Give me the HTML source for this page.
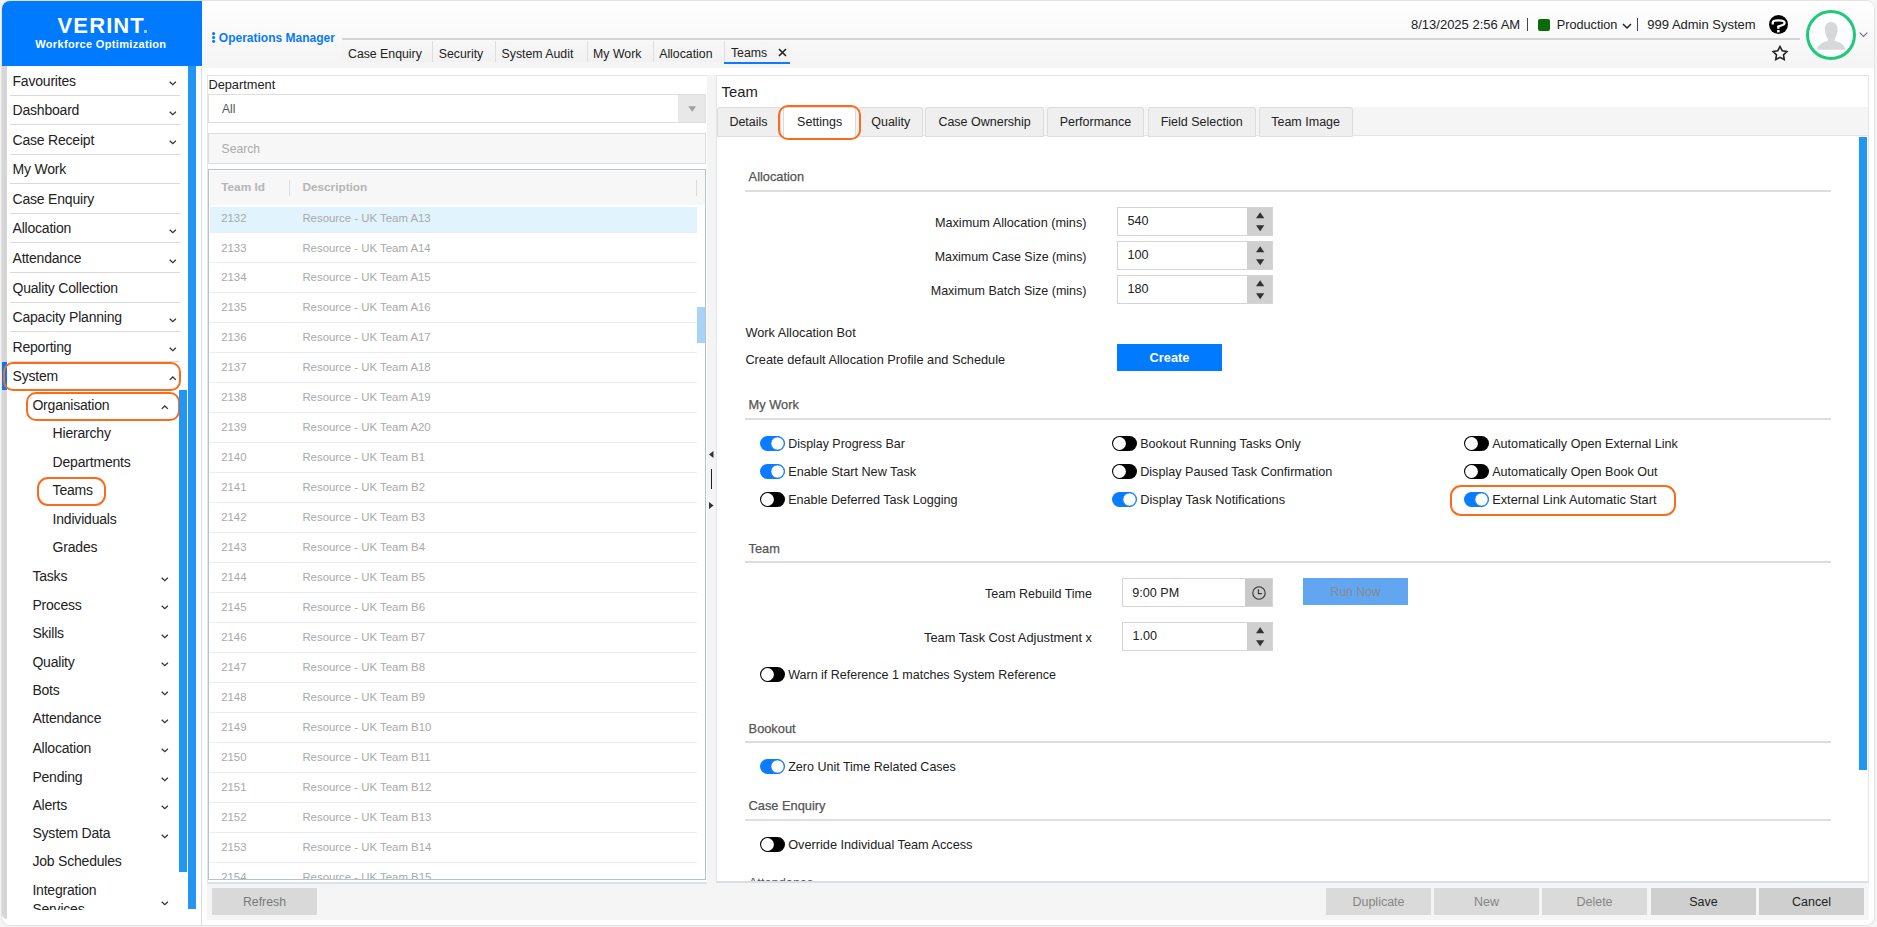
<!DOCTYPE html><html><head><meta charset="utf-8"><style>
*{margin:0;padding:0;box-sizing:border-box}
html,body{width:1877px;height:927px;overflow:hidden;background:#f5f5f5;font-family:"Liberation Sans", sans-serif}
.t{position:absolute;line-height:1;white-space:nowrap}
.r{position:absolute}
svg{position:absolute;overflow:visible}
</style></head><body>
<div class="r" style="left:2.00px;top:1.00px;width:1872.00px;height:924.00px;background:#fff;border-radius:8px;box-shadow:0 0 1px 1px #e2e2e2"></div>
<div class="r" style="left:202.00px;top:1.00px;width:1672.00px;height:66.60px;background:linear-gradient(#ffffff,#f4f4f4);border-top-right-radius:8px"></div>
<div class="r" style="left:2.00px;top:1.00px;width:200.00px;height:65.00px;background:#007bff;border-top-left-radius:8px"></div>
<div class="t" style="left:57.60px;top:14.58px;font-size:22px;color:#fff;font-weight:bold;letter-spacing:1.1px">VERINT</div>
<div class="r" style="left:143.50px;top:29.80px;width:3.00px;height:3.00px;background:#9cc8ff"></div>
<div class="t" style="left:35.30px;top:39.19px;font-size:11px;color:#fff;font-weight:bold;letter-spacing:0.33px">Workforce Optimization</div>
<svg style="left:210px;top:30px" width="8" height="15" viewBox="0 0 8 15"><circle cx="3.6" cy="3.6" r="1.6" fill="#0b7bff"/><circle cx="3.6" cy="7.5" r="1.6" fill="#0b7bff"/><circle cx="3.6" cy="11.3" r="1.6" fill="#0b7bff"/></svg>
<div class="t" style="left:218.80px;top:32.34px;font-size:12px;color:#0b7af8;font-weight:bold;">Operations Manager</div>
<div class="r" style="left:342.00px;top:38.00px;width:1458.00px;height:2.00px;background:#d4d4d4"></div>
<div class="r" style="left:342.00px;top:41.00px;width:448.00px;height:21.00px;background:linear-gradient(#f7f7f7,#f2f2f2)"></div>
<div class="t" style="left:348.00px;top:48.19px;font-size:12.3px;color:#222;font-weight:normal;">Case Enquiry</div>
<div class="r" style="left:432.20px;top:41.00px;width:1.00px;height:21.00px;background:#dedede"></div>
<div class="t" style="left:438.80px;top:48.19px;font-size:12.3px;color:#222;font-weight:normal;">Security</div>
<div class="r" style="left:495.00px;top:41.00px;width:1.00px;height:21.00px;background:#dedede"></div>
<div class="t" style="left:501.60px;top:48.19px;font-size:12.3px;color:#222;font-weight:normal;">System Audit</div>
<div class="r" style="left:586.50px;top:41.00px;width:1.00px;height:21.00px;background:#dedede"></div>
<div class="t" style="left:593.10px;top:48.19px;font-size:12.3px;color:#222;font-weight:normal;">My Work</div>
<div class="r" style="left:652.60px;top:41.00px;width:1.00px;height:21.00px;background:#dedede"></div>
<div class="t" style="left:659.20px;top:48.19px;font-size:12.3px;color:#222;font-weight:normal;">Allocation</div>
<div class="r" style="left:723.60px;top:41.00px;width:1.00px;height:21.00px;background:#dedede"></div>
<div class="t" style="left:730.90px;top:46.89px;font-size:12.3px;color:#222;font-weight:normal;">Teams</div>
<svg style="left:777.5px;top:48px" width="9" height="9" viewBox="0 0 9 9"><path d="M1 1L8 8M8 1L1 8" stroke="#222" stroke-width="1.6"/></svg>
<div class="r" style="left:723.60px;top:62.00px;width:66.40px;height:2.00px;background:#0b7bff"></div>
<div class="t" style="left:1411.00px;top:18.00px;font-size:13px;color:#222;font-weight:normal;">8/13/2025 2:56 AM</div>
<div class="r" style="left:1527.00px;top:18.00px;width:1.00px;height:13.00px;background:#444"></div>
<div class="r" style="left:1538.00px;top:19.00px;width:12.00px;height:11.60px;background:#0a6b0a;border-radius:2px"></div>
<div class="t" style="left:1556.70px;top:18.75px;font-size:12.7px;color:#222;font-weight:normal;">Production</div>
<svg style="left:1622px;top:23px" width="10" height="6" viewBox="0 0 10 6"><path d="M1 1L5 5L9 1" stroke="#222" stroke-width="1.5" fill="none"/></svg>
<div class="r" style="left:1637.00px;top:18.00px;width:1.00px;height:13.00px;background:#444"></div>
<div class="t" style="left:1647.30px;top:18.00px;font-size:13px;color:#222;font-weight:normal;">999 Admin System</div>
<svg style="left:1769px;top:15px" width="19" height="19" viewBox="0 0 19 19"><circle cx="9.5" cy="9.5" r="9.5" fill="#000"/><path d="M3.75 9.4L3.75 7.6C3.75 5.9 5.5 5.45 9.5 5.45C13.7 5.45 15.6 6.2 15.6 8C15.6 10 13 10.4 9.3 11.3L9.3 13.8" stroke="#fff" stroke-width="2.3" fill="none" stroke-linejoin="round"/><rect x="8.1" y="15" width="2.5" height="2.4" fill="#fff"/></svg>
<svg style="left:1771px;top:44.5px" width="18" height="17" viewBox="0 0 18 17"><path d="M9.00 1.50L11.17 5.71L15.85 6.48L12.52 9.84L13.23 14.52L9.00 12.40L4.77 14.52L5.48 9.84L2.15 6.48L6.83 5.71Z" stroke="#222" stroke-width="1.6" fill="none" stroke-linejoin="miter"/></svg>
<svg style="left:1806px;top:10px" width="50" height="50" viewBox="0 0 50 50"><circle cx="25" cy="25" r="23.5" fill="#fff" stroke="#1ec97a" stroke-width="3"/><path d="M25.2 12C29.3 12 31.6 15 31.6 19.5C31.6 24 29.8 27 28.6 29L28.6 31C33 31.8 38.5 34 39.5 39.8L10.9 39.8C12 34 17.5 31.8 21.8 31L21.8 29C20.6 27 18.8 24 18.8 19.5C18.8 15 21.1 12 25.2 12Z" fill="#d7d8da"/></svg>
<svg style="left:1858.5px;top:31.5px" width="9" height="6" viewBox="0 0 9 6"><path d="M0.7 0.7L4.5 4.5L8.3 0.7" stroke="#6a7080" stroke-width="1.1" fill="none"/></svg>
<div class="r" style="left:2.00px;top:66.00px;width:5.00px;height:853.00px;background:#d6d6d6;border-bottom-left-radius:6px"></div>
<div class="r" style="left:201.00px;top:67.00px;width:1.00px;height:858.00px;background:#dcdcdc"></div>
<div class="t" style="left:12.50px;top:73.65px;font-size:14px;color:#222;font-weight:normal;letter-spacing:-0.2px">Favourites</div>
<div class="r" style="left:10.00px;top:95.00px;width:170.00px;height:1.00px;background:#dadada"></div>
<svg style="left:168.8px;top:81.30000000000001px" width="8" height="5" viewBox="0 0 8 5"><path d="M0.7 0.7L3.8 3.6L6.9 0.7" stroke="#333" stroke-width="1.3" fill="none"/></svg>
<div class="t" style="left:12.50px;top:103.20px;font-size:14px;color:#222;font-weight:normal;letter-spacing:-0.2px">Dashboard</div>
<div class="r" style="left:10.00px;top:124.00px;width:170.00px;height:1.00px;background:#dadada"></div>
<svg style="left:168.8px;top:110.85000000000001px" width="8" height="5" viewBox="0 0 8 5"><path d="M0.7 0.7L3.8 3.6L6.9 0.7" stroke="#333" stroke-width="1.3" fill="none"/></svg>
<div class="t" style="left:12.50px;top:132.75px;font-size:14px;color:#222;font-weight:normal;letter-spacing:-0.2px">Case Receipt</div>
<div class="r" style="left:10.00px;top:154.00px;width:170.00px;height:1.00px;background:#dadada"></div>
<svg style="left:168.8px;top:140.4px" width="8" height="5" viewBox="0 0 8 5"><path d="M0.7 0.7L3.8 3.6L6.9 0.7" stroke="#333" stroke-width="1.3" fill="none"/></svg>
<div class="t" style="left:12.50px;top:162.30px;font-size:14px;color:#222;font-weight:normal;letter-spacing:-0.2px">My Work</div>
<div class="r" style="left:10.00px;top:183.00px;width:170.00px;height:1.00px;background:#dadada"></div>
<div class="t" style="left:12.50px;top:191.85px;font-size:14px;color:#222;font-weight:normal;letter-spacing:-0.2px">Case Enquiry</div>
<div class="r" style="left:10.00px;top:213.00px;width:170.00px;height:1.00px;background:#dadada"></div>
<div class="t" style="left:12.50px;top:221.40px;font-size:14px;color:#222;font-weight:normal;letter-spacing:-0.2px">Allocation</div>
<div class="r" style="left:10.00px;top:242.00px;width:170.00px;height:1.00px;background:#dadada"></div>
<svg style="left:168.8px;top:229.05px" width="8" height="5" viewBox="0 0 8 5"><path d="M0.7 0.7L3.8 3.6L6.9 0.7" stroke="#333" stroke-width="1.3" fill="none"/></svg>
<div class="t" style="left:12.50px;top:250.95px;font-size:14px;color:#222;font-weight:normal;letter-spacing:-0.2px">Attendance</div>
<div class="r" style="left:10.00px;top:272.00px;width:170.00px;height:1.00px;background:#dadada"></div>
<svg style="left:168.8px;top:258.6px" width="8" height="5" viewBox="0 0 8 5"><path d="M0.7 0.7L3.8 3.6L6.9 0.7" stroke="#333" stroke-width="1.3" fill="none"/></svg>
<div class="t" style="left:12.50px;top:280.50px;font-size:14px;color:#222;font-weight:normal;letter-spacing:-0.2px">Quality Collection</div>
<div class="r" style="left:10.00px;top:302.00px;width:170.00px;height:1.00px;background:#dadada"></div>
<div class="t" style="left:12.50px;top:310.05px;font-size:14px;color:#222;font-weight:normal;letter-spacing:-0.2px">Capacity Planning</div>
<div class="r" style="left:10.00px;top:331.00px;width:170.00px;height:1.00px;background:#dadada"></div>
<svg style="left:168.8px;top:317.7px" width="8" height="5" viewBox="0 0 8 5"><path d="M0.7 0.7L3.8 3.6L6.9 0.7" stroke="#333" stroke-width="1.3" fill="none"/></svg>
<div class="t" style="left:12.50px;top:339.60px;font-size:14px;color:#222;font-weight:normal;letter-spacing:-0.2px">Reporting</div>
<div class="r" style="left:10.00px;top:361.00px;width:170.00px;height:1.00px;background:#dadada"></div>
<svg style="left:168.8px;top:347.25px" width="8" height="5" viewBox="0 0 8 5"><path d="M0.7 0.7L3.8 3.6L6.9 0.7" stroke="#333" stroke-width="1.3" fill="none"/></svg>
<div class="t" style="left:12.50px;top:369.15px;font-size:14px;color:#222;font-weight:normal;letter-spacing:-0.2px">System</div>
<svg style="left:168.8px;top:375.79999999999995px" width="8" height="5" viewBox="0 0 8 5"><path d="M0.7 3.9L3.8 1L6.9 3.9" stroke="#333" stroke-width="1.3" fill="none"/></svg>
<div class="r" style="left:2.00px;top:362.00px;width:5.00px;height:28.00px;background:#007bff"></div>
<div class="r" style="left:3.00px;top:362.00px;width:178.00px;height:28.50px;border:2px solid #fc6a1c;border-radius:10px"></div>
<div class="t" style="left:32.40px;top:398.05px;font-size:14px;color:#222;font-weight:normal;letter-spacing:-0.2px">Organisation</div>
<svg style="left:160.8px;top:404.8px" width="8" height="5" viewBox="0 0 8 5"><path d="M0.7 3.9L3.8 1L6.9 3.9" stroke="#333" stroke-width="1.3" fill="none"/></svg>
<div class="r" style="left:26.00px;top:392.00px;width:154.00px;height:29.00px;border:2px solid #fc6a1c;border-radius:10px"></div>
<div class="t" style="left:52.60px;top:426.35px;font-size:14px;color:#222;font-weight:normal;letter-spacing:-0.2px">Hierarchy</div>
<div class="t" style="left:52.60px;top:454.85px;font-size:14px;color:#222;font-weight:normal;letter-spacing:-0.2px">Departments</div>
<div class="t" style="left:52.60px;top:483.35px;font-size:14px;color:#222;font-weight:normal;letter-spacing:-0.2px">Teams</div>
<div class="t" style="left:52.60px;top:511.85px;font-size:14px;color:#222;font-weight:normal;letter-spacing:-0.2px">Individuals</div>
<div class="t" style="left:52.60px;top:540.35px;font-size:14px;color:#222;font-weight:normal;letter-spacing:-0.2px">Grades</div>
<div class="r" style="left:37.00px;top:477.00px;width:68.70px;height:29.00px;border:2px solid #fc6a1c;border-radius:11px"></div>
<div class="t" style="left:32.40px;top:569.05px;font-size:14px;color:#222;font-weight:normal;letter-spacing:-0.2px">Tasks</div>
<svg style="left:160.8px;top:576.6999999999999px" width="8" height="5" viewBox="0 0 8 5"><path d="M0.7 0.7L3.8 3.6L6.9 0.7" stroke="#333" stroke-width="1.3" fill="none"/></svg>
<div class="t" style="left:32.40px;top:597.55px;font-size:14px;color:#222;font-weight:normal;letter-spacing:-0.2px">Process</div>
<svg style="left:160.8px;top:605.1999999999999px" width="8" height="5" viewBox="0 0 8 5"><path d="M0.7 0.7L3.8 3.6L6.9 0.7" stroke="#333" stroke-width="1.3" fill="none"/></svg>
<div class="t" style="left:32.40px;top:626.35px;font-size:14px;color:#222;font-weight:normal;letter-spacing:-0.2px">Skills</div>
<svg style="left:160.8px;top:634.0px" width="8" height="5" viewBox="0 0 8 5"><path d="M0.7 0.7L3.8 3.6L6.9 0.7" stroke="#333" stroke-width="1.3" fill="none"/></svg>
<div class="t" style="left:32.40px;top:654.65px;font-size:14px;color:#222;font-weight:normal;letter-spacing:-0.2px">Quality</div>
<svg style="left:160.8px;top:662.3px" width="8" height="5" viewBox="0 0 8 5"><path d="M0.7 0.7L3.8 3.6L6.9 0.7" stroke="#333" stroke-width="1.3" fill="none"/></svg>
<div class="t" style="left:32.40px;top:683.45px;font-size:14px;color:#222;font-weight:normal;letter-spacing:-0.2px">Bots</div>
<svg style="left:160.8px;top:691.1px" width="8" height="5" viewBox="0 0 8 5"><path d="M0.7 0.7L3.8 3.6L6.9 0.7" stroke="#333" stroke-width="1.3" fill="none"/></svg>
<div class="t" style="left:32.40px;top:711.35px;font-size:14px;color:#222;font-weight:normal;letter-spacing:-0.2px">Attendance</div>
<svg style="left:160.8px;top:719.0px" width="8" height="5" viewBox="0 0 8 5"><path d="M0.7 0.7L3.8 3.6L6.9 0.7" stroke="#333" stroke-width="1.3" fill="none"/></svg>
<div class="t" style="left:32.40px;top:740.75px;font-size:14px;color:#222;font-weight:normal;letter-spacing:-0.2px">Allocation</div>
<svg style="left:160.8px;top:748.4px" width="8" height="5" viewBox="0 0 8 5"><path d="M0.7 0.7L3.8 3.6L6.9 0.7" stroke="#333" stroke-width="1.3" fill="none"/></svg>
<div class="t" style="left:32.40px;top:769.55px;font-size:14px;color:#222;font-weight:normal;letter-spacing:-0.2px">Pending</div>
<svg style="left:160.8px;top:777.1999999999999px" width="8" height="5" viewBox="0 0 8 5"><path d="M0.7 0.7L3.8 3.6L6.9 0.7" stroke="#333" stroke-width="1.3" fill="none"/></svg>
<div class="t" style="left:32.40px;top:797.65px;font-size:14px;color:#222;font-weight:normal;letter-spacing:-0.2px">Alerts</div>
<svg style="left:160.8px;top:805.3px" width="8" height="5" viewBox="0 0 8 5"><path d="M0.7 0.7L3.8 3.6L6.9 0.7" stroke="#333" stroke-width="1.3" fill="none"/></svg>
<div class="t" style="left:32.40px;top:826.45px;font-size:14px;color:#222;font-weight:normal;letter-spacing:-0.2px">System Data</div>
<svg style="left:160.8px;top:834.1px" width="8" height="5" viewBox="0 0 8 5"><path d="M0.7 0.7L3.8 3.6L6.9 0.7" stroke="#333" stroke-width="1.3" fill="none"/></svg>
<div class="t" style="left:32.40px;top:854.45px;font-size:14px;color:#222;font-weight:normal;letter-spacing:-0.2px">Job Schedules</div>
<div class="r" style="left:7px;top:880px;width:171px;height:29.5px;overflow:hidden"><div class="t" style="left:25.40px;top:3.45px;font-size:14px;color:#222;font-weight:normal;letter-spacing:-0.2px">Integration</div><div class="t" style="left:25.40px;top:21.75px;font-size:14px;color:#222;font-weight:normal;letter-spacing:-0.2px">Services</div></div>
<svg style="left:160.8px;top:901px" width="8" height="5" viewBox="0 0 8 5"><path d="M0.7 0.7L3.8 3.6L6.9 0.7" stroke="#333" stroke-width="1.3" fill="none"/></svg>
<div class="r" style="left:179.00px;top:390.00px;width:8.00px;height:482.00px;background:#2196f3"></div>
<div class="r" style="left:188.00px;top:66.00px;width:8.00px;height:843.00px;background:#2196f3"></div>
<div class="r" style="left:207.00px;top:882.00px;width:1661.50px;height:38.00px;background:#f5f5f5"></div>
<div class="r" style="left:207.00px;top:75.00px;width:500.00px;height:809.00px;border:1px solid #dfe4ea;border-right:none;border-bottom:2px solid #dde2e7;background:#fff"></div>
<div class="t" style="left:208.40px;top:79.16px;font-size:12.8px;color:#222;font-weight:normal;">Department</div>
<div class="r" style="left:208.00px;top:94.00px;width:498.00px;height:29.00px;border:1px solid #dedede;background:#fff"></div>
<div class="r" style="left:678.00px;top:95.00px;width:27.00px;height:27.00px;background:#e8e8e8"></div>
<svg style="left:687.7px;top:105.7px" width="9" height="6" viewBox="0 0 9 6"><path d="M0.3 0.2L8.1 0.2L4.2 5.8Z" fill="#a0a0a0"/></svg>
<div class="t" style="left:222.00px;top:103.34px;font-size:12px;color:#555;font-weight:normal;">All</div>
<div class="r" style="left:208.00px;top:133.30px;width:498.00px;height:30.40px;border:1px solid #dedede;background:#f7f7f7"></div>
<div class="t" style="left:221.50px;top:143.27px;font-size:12.2px;color:#ababab;font-weight:normal;">Search</div>
<div class="r" style="left:208.00px;top:169.00px;width:498.00px;height:711.00px;border:1.5px solid #b8c0c8;border-right-width:1px;background:#fff;overflow:hidden"></div>
<div class="r" style="left:210.00px;top:171.00px;width:495.00px;height:34.00px;background:#f7f7f7"></div>
<div class="t" style="left:221.20px;top:181.51px;font-size:11.8px;color:#b5b5b5;font-weight:bold;">Team Id</div>
<div class="r" style="left:289.00px;top:180.00px;width:1.00px;height:16.00px;background:#dcdcdc"></div>
<div class="t" style="left:302.40px;top:181.51px;font-size:11.8px;color:#b5b5b5;font-weight:bold;">Description</div>
<div class="r" style="left:696.00px;top:180.00px;width:1.00px;height:16.00px;background:#dcdcdc"></div>
<div class="r" style="left:210.00px;top:207.00px;width:487.00px;height:25.40px;background:#e1f4fd"></div>
<div class="r" style="left:210.00px;top:232.40px;width:487.00px;height:1.00px;background:#eaedf0"></div>
<div class="r" style="left:210.00px;top:262.40px;width:487.00px;height:1.00px;background:#eaedf0"></div>
<div class="r" style="left:210.00px;top:292.40px;width:487.00px;height:1.00px;background:#eaedf0"></div>
<div class="r" style="left:210.00px;top:322.40px;width:487.00px;height:1.00px;background:#eaedf0"></div>
<div class="r" style="left:210.00px;top:352.40px;width:487.00px;height:1.00px;background:#eaedf0"></div>
<div class="r" style="left:210.00px;top:382.40px;width:487.00px;height:1.00px;background:#eaedf0"></div>
<div class="r" style="left:210.00px;top:412.40px;width:487.00px;height:1.00px;background:#eaedf0"></div>
<div class="r" style="left:210.00px;top:442.40px;width:487.00px;height:1.00px;background:#eaedf0"></div>
<div class="r" style="left:210.00px;top:472.40px;width:487.00px;height:1.00px;background:#eaedf0"></div>
<div class="r" style="left:210.00px;top:502.40px;width:487.00px;height:1.00px;background:#eaedf0"></div>
<div class="r" style="left:210.00px;top:532.40px;width:487.00px;height:1.00px;background:#eaedf0"></div>
<div class="r" style="left:210.00px;top:562.40px;width:487.00px;height:1.00px;background:#eaedf0"></div>
<div class="r" style="left:210.00px;top:592.40px;width:487.00px;height:1.00px;background:#eaedf0"></div>
<div class="r" style="left:210.00px;top:622.40px;width:487.00px;height:1.00px;background:#eaedf0"></div>
<div class="r" style="left:210.00px;top:652.40px;width:487.00px;height:1.00px;background:#eaedf0"></div>
<div class="r" style="left:210.00px;top:682.40px;width:487.00px;height:1.00px;background:#eaedf0"></div>
<div class="r" style="left:210.00px;top:712.40px;width:487.00px;height:1.00px;background:#eaedf0"></div>
<div class="r" style="left:210.00px;top:742.40px;width:487.00px;height:1.00px;background:#eaedf0"></div>
<div class="r" style="left:210.00px;top:772.40px;width:487.00px;height:1.00px;background:#eaedf0"></div>
<div class="r" style="left:210.00px;top:802.40px;width:487.00px;height:1.00px;background:#eaedf0"></div>
<div class="r" style="left:210.00px;top:832.40px;width:487.00px;height:1.00px;background:#eaedf0"></div>
<div class="r" style="left:210.00px;top:862.40px;width:487.00px;height:1.00px;background:#eaedf0"></div>
<div class="r" style="left:210px;top:205px;width:487px;height:674px;overflow:hidden"><div class="t" style="left:11.20px;top:7.55px;font-size:11.4px;color:#a9a9a9;font-weight:normal;">2132</div><div class="t" style="left:92.40px;top:7.55px;font-size:11.4px;color:#a9a9a9;font-weight:normal;">Resource - UK Team A13</div><div class="t" style="left:11.20px;top:37.52px;font-size:11.4px;color:#a9a9a9;font-weight:normal;">2133</div><div class="t" style="left:92.40px;top:37.52px;font-size:11.4px;color:#a9a9a9;font-weight:normal;">Resource - UK Team A14</div><div class="t" style="left:11.20px;top:67.49px;font-size:11.4px;color:#a9a9a9;font-weight:normal;">2134</div><div class="t" style="left:92.40px;top:67.49px;font-size:11.4px;color:#a9a9a9;font-weight:normal;">Resource - UK Team A15</div><div class="t" style="left:11.20px;top:97.46px;font-size:11.4px;color:#a9a9a9;font-weight:normal;">2135</div><div class="t" style="left:92.40px;top:97.46px;font-size:11.4px;color:#a9a9a9;font-weight:normal;">Resource - UK Team A16</div><div class="t" style="left:11.20px;top:127.43px;font-size:11.4px;color:#a9a9a9;font-weight:normal;">2136</div><div class="t" style="left:92.40px;top:127.43px;font-size:11.4px;color:#a9a9a9;font-weight:normal;">Resource - UK Team A17</div><div class="t" style="left:11.20px;top:157.40px;font-size:11.4px;color:#a9a9a9;font-weight:normal;">2137</div><div class="t" style="left:92.40px;top:157.40px;font-size:11.4px;color:#a9a9a9;font-weight:normal;">Resource - UK Team A18</div><div class="t" style="left:11.20px;top:187.37px;font-size:11.4px;color:#a9a9a9;font-weight:normal;">2138</div><div class="t" style="left:92.40px;top:187.37px;font-size:11.4px;color:#a9a9a9;font-weight:normal;">Resource - UK Team A19</div><div class="t" style="left:11.20px;top:217.34px;font-size:11.4px;color:#a9a9a9;font-weight:normal;">2139</div><div class="t" style="left:92.40px;top:217.34px;font-size:11.4px;color:#a9a9a9;font-weight:normal;">Resource - UK Team A20</div><div class="t" style="left:11.20px;top:247.31px;font-size:11.4px;color:#a9a9a9;font-weight:normal;">2140</div><div class="t" style="left:92.40px;top:247.31px;font-size:11.4px;color:#a9a9a9;font-weight:normal;">Resource - UK Team B1</div><div class="t" style="left:11.20px;top:277.28px;font-size:11.4px;color:#a9a9a9;font-weight:normal;">2141</div><div class="t" style="left:92.40px;top:277.28px;font-size:11.4px;color:#a9a9a9;font-weight:normal;">Resource - UK Team B2</div><div class="t" style="left:11.20px;top:307.25px;font-size:11.4px;color:#a9a9a9;font-weight:normal;">2142</div><div class="t" style="left:92.40px;top:307.25px;font-size:11.4px;color:#a9a9a9;font-weight:normal;">Resource - UK Team B3</div><div class="t" style="left:11.20px;top:337.22px;font-size:11.4px;color:#a9a9a9;font-weight:normal;">2143</div><div class="t" style="left:92.40px;top:337.22px;font-size:11.4px;color:#a9a9a9;font-weight:normal;">Resource - UK Team B4</div><div class="t" style="left:11.20px;top:367.19px;font-size:11.4px;color:#a9a9a9;font-weight:normal;">2144</div><div class="t" style="left:92.40px;top:367.19px;font-size:11.4px;color:#a9a9a9;font-weight:normal;">Resource - UK Team B5</div><div class="t" style="left:11.20px;top:397.16px;font-size:11.4px;color:#a9a9a9;font-weight:normal;">2145</div><div class="t" style="left:92.40px;top:397.16px;font-size:11.4px;color:#a9a9a9;font-weight:normal;">Resource - UK Team B6</div><div class="t" style="left:11.20px;top:427.13px;font-size:11.4px;color:#a9a9a9;font-weight:normal;">2146</div><div class="t" style="left:92.40px;top:427.13px;font-size:11.4px;color:#a9a9a9;font-weight:normal;">Resource - UK Team B7</div><div class="t" style="left:11.20px;top:457.10px;font-size:11.4px;color:#a9a9a9;font-weight:normal;">2147</div><div class="t" style="left:92.40px;top:457.10px;font-size:11.4px;color:#a9a9a9;font-weight:normal;">Resource - UK Team B8</div><div class="t" style="left:11.20px;top:487.07px;font-size:11.4px;color:#a9a9a9;font-weight:normal;">2148</div><div class="t" style="left:92.40px;top:487.07px;font-size:11.4px;color:#a9a9a9;font-weight:normal;">Resource - UK Team B9</div><div class="t" style="left:11.20px;top:517.04px;font-size:11.4px;color:#a9a9a9;font-weight:normal;">2149</div><div class="t" style="left:92.40px;top:517.04px;font-size:11.4px;color:#a9a9a9;font-weight:normal;">Resource - UK Team B10</div><div class="t" style="left:11.20px;top:547.01px;font-size:11.4px;color:#a9a9a9;font-weight:normal;">2150</div><div class="t" style="left:92.40px;top:547.01px;font-size:11.4px;color:#a9a9a9;font-weight:normal;">Resource - UK Team B11</div><div class="t" style="left:11.20px;top:576.98px;font-size:11.4px;color:#a9a9a9;font-weight:normal;">2151</div><div class="t" style="left:92.40px;top:576.98px;font-size:11.4px;color:#a9a9a9;font-weight:normal;">Resource - UK Team B12</div><div class="t" style="left:11.20px;top:606.95px;font-size:11.4px;color:#a9a9a9;font-weight:normal;">2152</div><div class="t" style="left:92.40px;top:606.95px;font-size:11.4px;color:#a9a9a9;font-weight:normal;">Resource - UK Team B13</div><div class="t" style="left:11.20px;top:636.92px;font-size:11.4px;color:#a9a9a9;font-weight:normal;">2153</div><div class="t" style="left:92.40px;top:636.92px;font-size:11.4px;color:#a9a9a9;font-weight:normal;">Resource - UK Team B14</div><div class="t" style="left:11.20px;top:666.89px;font-size:11.4px;color:#a9a9a9;font-weight:normal;">2154</div><div class="t" style="left:92.40px;top:666.89px;font-size:11.4px;color:#a9a9a9;font-weight:normal;">Resource - UK Team B15</div></div>
<div class="r" style="left:697.00px;top:306.80px;width:8.00px;height:36.20px;background:#a6d3f6"></div>
<div class="r" style="left:706.50px;top:75.00px;width:9.50px;height:807.00px;background:#f4f4f4"></div>
<svg style="left:708.5px;top:450.5px" width="5" height="7" viewBox="0 0 5 7"><path d="M4.5 0L0 3.5L4.5 7Z" fill="#333"/></svg>
<div class="r" style="left:710.50px;top:468.60px;width:1.70px;height:20.20px;background:#222"></div>
<svg style="left:709px;top:502px" width="5" height="7" viewBox="0 0 5 7"><path d="M0 0L4.5 3.5L0 7Z" fill="#333"/></svg>
<div class="r" style="left:212.00px;top:888.00px;width:105.00px;height:26.70px;background:#d9d9d9"></div>
<div class="t" style="left:212.00px;top:896.19px;width:105px;text-align:center;font-size:12.3px;color:#7a7a7a;font-weight:normal;">Refresh</div>
<div class="r" style="left:1326.00px;top:888.00px;width:105.00px;height:26.70px;background:#dadada"></div>
<div class="t" style="left:1326.00px;top:896.02px;width:105px;text-align:center;font-size:12.5px;color:#858585;font-weight:normal;">Duplicate</div>
<div class="r" style="left:1434.00px;top:888.00px;width:105.00px;height:26.70px;background:#dadada"></div>
<div class="t" style="left:1434.00px;top:896.02px;width:105px;text-align:center;font-size:12.5px;color:#858585;font-weight:normal;">New</div>
<div class="r" style="left:1542.00px;top:888.00px;width:105.00px;height:26.70px;background:#dadada"></div>
<div class="t" style="left:1542.00px;top:896.02px;width:105px;text-align:center;font-size:12.5px;color:#858585;font-weight:normal;">Delete</div>
<div class="r" style="left:1651.00px;top:888.00px;width:105.00px;height:26.70px;background:#cfcfcf"></div>
<div class="t" style="left:1651.00px;top:896.02px;width:105px;text-align:center;font-size:12.5px;color:#222;font-weight:normal;">Save</div>
<div class="r" style="left:1759.00px;top:888.00px;width:105.00px;height:26.70px;background:#cfcfcf"></div>
<div class="t" style="left:1759.00px;top:896.02px;width:105px;text-align:center;font-size:12.5px;color:#222;font-weight:normal;">Cancel</div>
<div class="r" style="left:716.00px;top:75.00px;width:1153.00px;height:808.00px;border:1px solid #e2e5e9;border-bottom:2px solid #d9dee3;background:#fff"></div>
<div class="t" style="left:721.60px;top:84.87px;font-size:14.8px;color:#222;font-weight:normal;">Team</div>
<div class="r" style="left:717.60px;top:107.00px;width:1150.40px;height:29.00px;background:#f5f5f5;border-bottom:1px solid #e2e6ea"></div>
<div class="r" style="left:716.50px;top:107.00px;width:64.00px;height:29.50px;background:#efefef;border:1px solid #dcdcdc;border-radius:3px 3px 0 0"></div>
<div class="t" style="left:716.50px;top:115.72px;width:64.0px;text-align:center;font-size:12.5px;color:#222;font-weight:normal;">Details</div>
<div class="r" style="left:783.00px;top:107.00px;width:73.40px;height:30.00px;background:#fff;border:1px solid #dcdcdc;border-bottom:none;border-radius:3px 3px 0 0"></div>
<div class="t" style="left:783.00px;top:115.72px;width:73.39999999999998px;text-align:center;font-size:12.5px;color:#222;font-weight:normal;">Settings</div>
<div class="r" style="left:858.80px;top:107.00px;width:63.80px;height:29.50px;background:#efefef;border:1px solid #dcdcdc;border-radius:3px 3px 0 0"></div>
<div class="t" style="left:858.80px;top:115.72px;width:63.80000000000007px;text-align:center;font-size:12.5px;color:#222;font-weight:normal;">Quality</div>
<div class="r" style="left:925.40px;top:107.00px;width:118.40px;height:29.50px;background:#efefef;border:1px solid #dcdcdc;border-radius:3px 3px 0 0"></div>
<div class="t" style="left:925.40px;top:115.72px;width:118.39999999999998px;text-align:center;font-size:12.5px;color:#222;font-weight:normal;">Case Ownership</div>
<div class="r" style="left:1046.50px;top:107.00px;width:97.90px;height:29.50px;background:#efefef;border:1px solid #dcdcdc;border-radius:3px 3px 0 0"></div>
<div class="t" style="left:1046.50px;top:115.72px;width:97.90000000000009px;text-align:center;font-size:12.5px;color:#222;font-weight:normal;">Performance</div>
<div class="r" style="left:1147.60px;top:107.00px;width:108.10px;height:29.50px;background:#efefef;border:1px solid #dcdcdc;border-radius:3px 3px 0 0"></div>
<div class="t" style="left:1147.60px;top:115.72px;width:108.10000000000014px;text-align:center;font-size:12.5px;color:#222;font-weight:normal;">Field Selection</div>
<div class="r" style="left:1258.50px;top:107.00px;width:94.20px;height:29.50px;background:#efefef;border:1px solid #dcdcdc;border-radius:3px 3px 0 0"></div>
<div class="t" style="left:1258.50px;top:115.72px;width:94.20000000000005px;text-align:center;font-size:12.5px;color:#222;font-weight:normal;">Team Image</div>
<div class="r" style="left:778.20px;top:105.00px;width:82.70px;height:34.80px;border:2px solid #fc6a1c;border-radius:10px"></div>
<div class="r" style="left:1859.00px;top:137.00px;width:8.00px;height:633.00px;background:#2196f3"></div>
<div class="t" style="left:748.60px;top:170.96px;font-size:12.8px;color:#555;font-weight:normal;-webkit-text-stroke:0.25px #555">Allocation</div>
<div class="r" style="left:745.00px;top:190.00px;width:1086.00px;height:2.00px;background:#dddddd"></div>
<div class="t" style="left:686.50px;top:216.85px;width:400px;text-align:right;font-size:12.7px;color:#222;font-weight:normal;">Maximum Allocation (mins)</div>
<div class="r" style="left:1117.00px;top:207.00px;width:156.00px;height:29.00px;border:1px solid #d4d4d4;background:#fff"></div>
<div class="r" style="left:1247.00px;top:208.00px;width:25.00px;height:27.00px;background:#d0d0d0"></div>
<svg style="left:1255.95px;top:211.50px" width="9" height="20" viewBox="0 0 9 20"><path d="M0 6.2L4.15 0.3L8.3 6.2Z M0 13.3L4.15 19.2L8.3 13.3Z" fill="#333"/></svg>
<div class="t" style="left:1127.60px;top:214.63px;font-size:12.6px;color:#222;font-weight:normal;">540</div>
<div class="t" style="left:686.50px;top:251.08px;width:400px;text-align:right;font-size:12.43px;color:#222;font-weight:normal;">Maximum Case Size (mins)</div>
<div class="r" style="left:1117.00px;top:241.00px;width:156.00px;height:29.00px;border:1px solid #d4d4d4;background:#fff"></div>
<div class="r" style="left:1247.00px;top:242.00px;width:25.00px;height:27.00px;background:#d0d0d0"></div>
<svg style="left:1255.95px;top:245.50px" width="9" height="20" viewBox="0 0 9 20"><path d="M0 6.2L4.15 0.3L8.3 6.2Z M0 13.3L4.15 19.2L8.3 13.3Z" fill="#333"/></svg>
<div class="t" style="left:1127.60px;top:248.63px;font-size:12.6px;color:#222;font-weight:normal;">100</div>
<div class="t" style="left:686.50px;top:285.00px;width:400px;text-align:right;font-size:12.52px;color:#222;font-weight:normal;">Maximum Batch Size (mins)</div>
<div class="r" style="left:1117.00px;top:275.00px;width:156.00px;height:29.00px;border:1px solid #d4d4d4;background:#fff"></div>
<div class="r" style="left:1247.00px;top:276.00px;width:25.00px;height:27.00px;background:#d0d0d0"></div>
<svg style="left:1255.95px;top:279.50px" width="9" height="20" viewBox="0 0 9 20"><path d="M0 6.2L4.15 0.3L8.3 6.2Z M0 13.3L4.15 19.2L8.3 13.3Z" fill="#333"/></svg>
<div class="t" style="left:1127.60px;top:282.63px;font-size:12.6px;color:#222;font-weight:normal;">180</div>
<div class="t" style="left:745.40px;top:327.00px;font-size:12.76px;color:#222;font-weight:normal;">Work Allocation Bot</div>
<div class="t" style="left:745.40px;top:354.18px;font-size:12.78px;color:#222;font-weight:normal;">Create default Allocation Profile and Schedule</div>
<div class="r" style="left:1117.00px;top:344.20px;width:105.00px;height:26.60px;background:#007bff"></div>
<div class="t" style="left:1117.00px;top:352.26px;width:105px;text-align:center;font-size:12.8px;color:#fff;font-weight:bold;">Create</div>
<div class="t" style="left:748.60px;top:398.86px;font-size:12.8px;color:#555;font-weight:normal;-webkit-text-stroke:0.25px #555">My Work</div>
<div class="r" style="left:745.00px;top:418.00px;width:1086.00px;height:2.00px;background:#dddddd"></div>
<svg style="left:760.00px;top:436.00px" width="25" height="15" viewBox="0 0 25 15"><rect x="0" y="0" width="25" height="15" rx="7.5" fill="#0b7bff"/><circle cx="17.5" cy="7.5" r="6.6" fill="#fff" stroke="#0b7bff" stroke-width="0.8"/></svg>
<div class="t" style="left:788.20px;top:438.28px;font-size:12.43px;color:#222;font-weight:normal;">Display Progress Bar</div>
<svg style="left:760.00px;top:464.00px" width="25" height="15" viewBox="0 0 25 15"><rect x="0" y="0" width="25" height="15" rx="7.5" fill="#0b7bff"/><circle cx="17.5" cy="7.5" r="6.6" fill="#fff" stroke="#0b7bff" stroke-width="0.8"/></svg>
<div class="t" style="left:788.20px;top:466.07px;font-size:12.68px;color:#222;font-weight:normal;">Enable Start New Task</div>
<svg style="left:760.00px;top:492.00px" width="25" height="15" viewBox="0 0 25 15"><rect x="0" y="0" width="25" height="15" rx="7.5" fill="#000"/><circle cx="7.5" cy="7.5" r="6.4" fill="#fff"/></svg>
<div class="t" style="left:788.20px;top:494.12px;font-size:12.62px;color:#222;font-weight:normal;">Enable Deferred Task Logging</div>
<svg style="left:1112.00px;top:436.00px" width="25" height="15" viewBox="0 0 25 15"><rect x="0" y="0" width="25" height="15" rx="7.5" fill="#000"/><circle cx="7.5" cy="7.5" r="6.4" fill="#fff"/></svg>
<div class="t" style="left:1140.20px;top:438.20px;font-size:12.52px;color:#222;font-weight:normal;">Bookout Running Tasks Only</div>
<svg style="left:1112.00px;top:464.00px" width="25" height="15" viewBox="0 0 25 15"><rect x="0" y="0" width="25" height="15" rx="7.5" fill="#000"/><circle cx="7.5" cy="7.5" r="6.4" fill="#fff"/></svg>
<div class="t" style="left:1140.20px;top:466.11px;font-size:12.63px;color:#222;font-weight:normal;">Display Paused Task Confirmation</div>
<svg style="left:1112.00px;top:492.00px" width="25" height="15" viewBox="0 0 25 15"><rect x="0" y="0" width="25" height="15" rx="7.5" fill="#0b7bff"/><circle cx="17.5" cy="7.5" r="6.6" fill="#fff" stroke="#0b7bff" stroke-width="0.8"/></svg>
<div class="t" style="left:1140.20px;top:493.96px;font-size:12.81px;color:#222;font-weight:normal;">Display Task Notifications</div>
<svg style="left:1464.00px;top:436.00px" width="25" height="15" viewBox="0 0 25 15"><rect x="0" y="0" width="25" height="15" rx="7.5" fill="#000"/><circle cx="7.5" cy="7.5" r="6.4" fill="#fff"/></svg>
<div class="t" style="left:1492.20px;top:438.12px;font-size:12.62px;color:#222;font-weight:normal;">Automatically Open External Link</div>
<svg style="left:1464.00px;top:464.00px" width="25" height="15" viewBox="0 0 25 15"><rect x="0" y="0" width="25" height="15" rx="7.5" fill="#000"/><circle cx="7.5" cy="7.5" r="6.4" fill="#fff"/></svg>
<div class="t" style="left:1492.20px;top:466.12px;font-size:12.62px;color:#222;font-weight:normal;">Automatically Open Book Out</div>
<svg style="left:1464.00px;top:492.00px" width="25" height="15" viewBox="0 0 25 15"><rect x="0" y="0" width="25" height="15" rx="7.5" fill="#0b7bff"/><circle cx="17.5" cy="7.5" r="6.6" fill="#fff" stroke="#0b7bff" stroke-width="0.8"/></svg>
<div class="t" style="left:1492.20px;top:493.96px;font-size:12.8px;color:#222;font-weight:normal;">External Link Automatic Start</div>
<div class="r" style="left:1450.30px;top:485.00px;width:225.50px;height:31.00px;border:2.2px solid #fc6a1c;border-radius:11px"></div>
<div class="t" style="left:748.60px;top:542.66px;font-size:12.8px;color:#555;font-weight:normal;-webkit-text-stroke:0.25px #555">Team</div>
<div class="r" style="left:745.00px;top:561.00px;width:1086.00px;height:2.00px;background:#dddddd"></div>
<div class="t" style="left:692.00px;top:587.82px;width:400px;text-align:right;font-size:12.5px;color:#222;font-weight:normal;">Team Rebuild Time</div>
<div class="r" style="left:1122.00px;top:578.00px;width:151.00px;height:29.00px;border:1px solid #d4d4d4;background:#fff"></div>
<div class="r" style="left:1245.00px;top:579.00px;width:27.00px;height:27.00px;background:#c9c9c9"></div>
<svg style="left:1251.6px;top:585.6px" width="14" height="14" viewBox="0 0 14 14"><circle cx="7" cy="7" r="6.2" stroke="#333" stroke-width="1.1" fill="none"/><path d="M6.4 3.3V7.6H9.8" stroke="#333" stroke-width="1.1" fill="none"/></svg>
<div class="t" style="left:1132.30px;top:586.83px;font-size:12.6px;color:#222;font-weight:normal;">9:00 PM</div>
<div class="r" style="left:1303.00px;top:578.00px;width:105.00px;height:27.00px;background:#62a6f1"></div>
<div class="t" style="left:1303.00px;top:586.27px;width:105px;text-align:center;font-size:12.2px;color:#8a8a8a;font-weight:normal;">Run Now</div>
<div class="t" style="left:692.00px;top:631.64px;width:400px;text-align:right;font-size:12.83px;color:#222;font-weight:normal;">Team Task Cost Adjustment x</div>
<div class="r" style="left:1122.00px;top:622.00px;width:151.00px;height:29.00px;border:1px solid #d4d4d4;background:#fff"></div>
<div class="r" style="left:1247.00px;top:623.00px;width:25.00px;height:27.00px;background:#d0d0d0"></div>
<svg style="left:1255.95px;top:626.50px" width="9" height="20" viewBox="0 0 9 20"><path d="M0 6.2L4.15 0.3L8.3 6.2Z M0 13.3L4.15 19.2L8.3 13.3Z" fill="#333"/></svg>
<div class="t" style="left:1132.60px;top:629.63px;font-size:12.6px;color:#222;font-weight:normal;">1.00</div>
<svg style="left:760.00px;top:667.00px" width="25" height="15" viewBox="0 0 25 15"><rect x="0" y="0" width="25" height="15" rx="7.5" fill="#000"/><circle cx="7.5" cy="7.5" r="6.4" fill="#fff"/></svg>
<div class="t" style="left:788.20px;top:669.32px;font-size:12.5px;color:#222;font-weight:normal;">Warn if Reference 1 matches System Reference</div>
<div class="t" style="left:748.60px;top:722.86px;font-size:12.8px;color:#555;font-weight:normal;-webkit-text-stroke:0.25px #555">Bookout</div>
<div class="r" style="left:745.00px;top:741.00px;width:1086.00px;height:2.00px;background:#dddddd"></div>
<svg style="left:760.00px;top:759.10px" width="25" height="15" viewBox="0 0 25 15"><rect x="0" y="0" width="25" height="15" rx="7.5" fill="#0b7bff"/><circle cx="17.5" cy="7.5" r="6.6" fill="#fff" stroke="#0b7bff" stroke-width="0.8"/></svg>
<div class="t" style="left:788.20px;top:761.30px;font-size:12.52px;color:#222;font-weight:normal;">Zero Unit Time Related Cases</div>
<div class="t" style="left:748.60px;top:799.76px;font-size:12.8px;color:#555;font-weight:normal;-webkit-text-stroke:0.25px #555">Case Enquiry</div>
<div class="r" style="left:745.00px;top:819.00px;width:1086.00px;height:2.00px;background:#dddddd"></div>
<svg style="left:760.00px;top:837.00px" width="25" height="15" viewBox="0 0 25 15"><rect x="0" y="0" width="25" height="15" rx="7.5" fill="#000"/><circle cx="7.5" cy="7.5" r="6.4" fill="#fff"/></svg>
<div class="t" style="left:788.20px;top:839.02px;font-size:12.73px;color:#222;font-weight:normal;">Override Individual Team Access</div>
<div class="r" style="left:740px;top:870px;width:200px;height:11px;overflow:hidden"><div class="t" style="left:8.80px;top:7.26px;font-size:12.8px;color:#555;font-weight:normal;">Attendance</div></div>
</body></html>
